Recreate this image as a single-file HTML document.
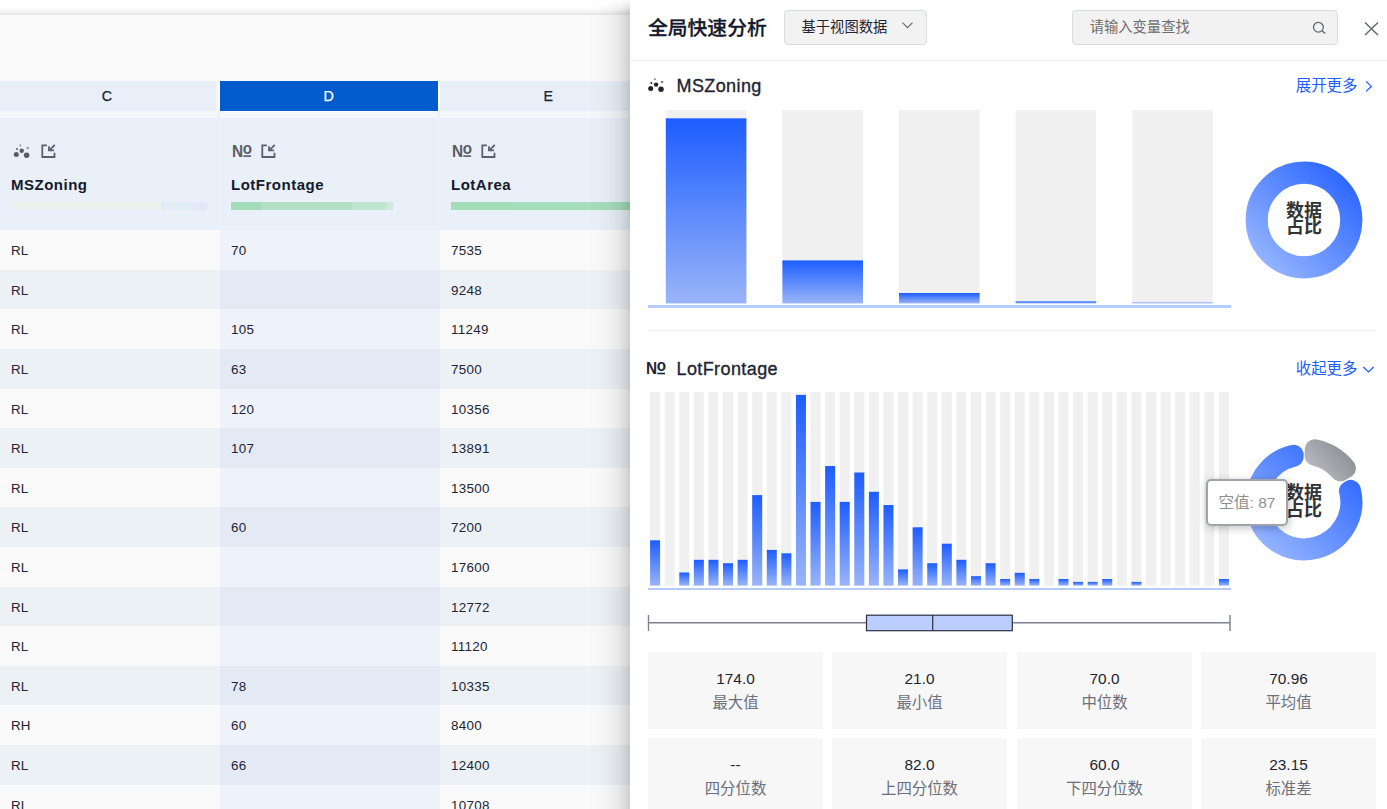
<!DOCTYPE html><html lang="zh"><head><meta charset="utf-8"><title>全局快速分析</title><style>
*{box-sizing:border-box;margin:0;padding:0}
html,body{width:1387px;height:809px;overflow:hidden;background:#fafafa;font-family:"Liberation Sans", "Noto Sans CJK SC", sans-serif;color:#1f2433}
.abs{position:absolute}
#topbar{position:absolute;left:0;top:0;width:1387px;height:14.5px;background:linear-gradient(to bottom,#fff 0%,#fff 40%,#fbfbfb 60%,#f3f3f3 80%,#e5e5e5 100%)}
#grid{position:absolute;left:0;top:0;width:640px;height:809px;overflow:hidden}
.colhd{position:absolute;top:81px;height:30px;background:#e9eff8;font-size:14.3px;line-height:31px;text-align:center;color:#1f2433;-webkit-text-stroke:.25px currentColor}
.colhd.sel{background:#005ccc;color:#fff}
#gaprow{position:absolute;left:0;top:111px;width:640px;height:7px;background:#f4f7fa}
#hdrow{position:absolute;left:0;top:118px;width:640px;height:113px;background:#e9f0f9}
.hname{position:absolute;top:175.9px;font-weight:bold;font-size:15px;letter-spacing:.5px;line-height:18px;color:#141a2b;white-space:nowrap}
.row{position:absolute;left:0;width:640px;height:39.6px}
.row.odd{background:#fafafa}
.row.even{background:#ecf1f6}
.cell{position:absolute;top:0;height:39.6px;line-height:41.2px;font-size:13.4px;color:#1f2433;padding-left:11px;white-space:nowrap}
.cell.n{letter-spacing:.3px}
.row.odd .cell.d{background:#edf2fb}
.row.even .cell.d{background:#e3eaf6}
#panel{position:absolute;left:630px;top:0;width:757px;height:809px;background:#fff}
#pshadow{position:absolute;left:588px;top:0;width:42px;height:809px;background:linear-gradient(to right,rgba(0,0,0,0) 0%,rgba(0,0,0,.01) 24%,rgba(0,0,0,.032) 50%,rgba(0,0,0,.08) 75%,rgba(0,0,0,.125) 88%,rgba(0,0,0,.18) 100%)}
#ptitle{position:absolute;left:18px;top:12.8px;font-size:19.8px;line-height:30px;font-weight:500;-webkit-text-stroke:.3px #141a2b;color:#141a2b;white-space:nowrap}
#dd{position:absolute;left:154px;top:10px;width:143px;height:35px;background:#f2f2f2;border:1px solid #d9dce6;border-radius:4px;font-size:14.3px;line-height:33px;padding-left:16.5px;color:#1f2433;white-space:nowrap}
#search{position:absolute;left:442px;top:10px;width:266px;height:35px;background:#f2f2f2;border:1px solid #d9dce6;border-radius:4px;font-size:14.3px;line-height:33px;padding-left:16.7px;color:#6e6e6e;white-space:nowrap}
.hline{position:absolute;height:1px;background:#ededed}
.stitle{position:absolute;left:46.5px;font-size:18px;letter-spacing:.4px;line-height:26px;color:#1f2433;white-space:nowrap;font-weight:500;-webkit-text-stroke:.35px #1f2433}
.more{position:absolute;right:29.6px;font-size:15.4px;line-height:22px;color:#1b5dff;white-space:nowrap}
.card{position:absolute;width:175px;height:77px;background:#f7f7f7;text-align:center}
.card .v{position:absolute;left:0;right:0;top:15.5px;font-size:15.4px;line-height:22px;color:#1f2433}
.card .l{position:absolute;left:0;right:0;top:39.8px;font-size:15.4px;line-height:22px;color:#6b707c}
#tip{position:absolute;left:576px;top:479px;width:82px;height:46.5px;background:#fff;border:2px solid #a0a3ab;border-radius:5px;box-shadow:1px 2px 8px rgba(0,0,0,.25);font-size:15.5px;line-height:44.5px;text-align:center;color:#8f8f8f;white-space:nowrap}
</style></head><body>
<div id="grid">
<div class="colhd" style="left:-2px;width:218px">C</div>
<div class="colhd sel" style="left:220px;width:217.5px">D</div>
<div class="colhd" style="left:440px;width:216.5px">E</div>
<div class="abs" style="left:216px;top:81px;width:2px;height:30px;background:#f1f5fa"></div><div class="abs" style="left:218px;top:81px;width:2px;height:30px;background:#fff"></div>
<div class="abs" style="left:437.5px;top:81px;width:2.5px;height:30px;background:#fff"></div>
<div id="gaprow"></div>
<div class="abs" style="left:218px;top:111px;width:2px;height:7px;background:#e9f0f9"></div>
<div class="abs" style="left:438px;top:111px;width:2px;height:7px;background:#e9f0f9"></div>
<div class="abs" style="left:220px;top:111px;width:217.5px;height:1.4px;background:#fff"></div>
<div id="hdrow"></div>
<div class="abs" style="left:218px;top:118px;width:2px;height:112px;background:#ebf1f9"></div>
<div class="abs" style="left:438px;top:118px;width:2px;height:112px;background:#ebf1f9"></div>
<svg class="abs" style="left:12px;top:143px" width="19" height="17" viewBox="0 0 19 17" ><g transform="translate(0 0)"><g fill="#5c5c62"><circle cx="4.3" cy="11.5" r="2.5"/><circle cx="14.6" cy="12.3" r="2.75"/><circle cx="9.7" cy="7.7" r="2.2"/><circle cx="8.4" cy="2.4" r="1.05" opacity=".55"/><circle cx="15.7" cy="5.1" r="1.25" opacity=".6"/><circle cx="5" cy="6.1" r="1"/></g></g></svg>
<svg class="abs" style="left:40px;top:143px" width="17" height="17" viewBox="0 0 17 17" ><g transform="translate(0 0.5)"><g fill="none" stroke="#596070" stroke-width="1.8"><path d="M6.9 1.9H2.3V13.5H14.5V9.2"/><path d="M14.8 1.3L9 7.1M9 2.7V6.9H14.1"/></g></g></svg>
<svg class="abs" style="left:231px;top:143px" width="23" height="17" viewBox="0 0 23 17" font-family='"Liberation Sans", sans-serif' font-weight="bold" fill="#5c5c62"><g transform="translate(0 0)"><text transform="translate(1,13.8) scale(1,1.02)" font-size="15.4">N</text><text transform="translate(11.8,10.8) scale(1,1.03)" font-size="15.2">o</text><rect x="12.3" y="12.3" width="7.8" height="1.6"/></g></svg>
<svg class="abs" style="left:260px;top:143px" width="17" height="17" viewBox="0 0 17 17" ><g transform="translate(0 0.5)"><g fill="none" stroke="#596070" stroke-width="1.8"><path d="M6.9 1.9H2.3V13.5H14.5V9.2"/><path d="M14.8 1.3L9 7.1M9 2.7V6.9H14.1"/></g></g></svg>
<svg class="abs" style="left:451px;top:143px" width="23" height="17" viewBox="0 0 23 17" font-family='"Liberation Sans", sans-serif' font-weight="bold" fill="#5c5c62"><g transform="translate(0 0)"><text transform="translate(1,13.8) scale(1,1.02)" font-size="15.4">N</text><text transform="translate(11.8,10.8) scale(1,1.03)" font-size="15.2">o</text><rect x="12.3" y="12.3" width="7.8" height="1.6"/></g></svg>
<svg class="abs" style="left:480px;top:143px" width="17" height="17" viewBox="0 0 17 17" ><g transform="translate(0 0.5)"><g fill="none" stroke="#596070" stroke-width="1.8"><path d="M6.9 1.9H2.3V13.5H14.5V9.2"/><path d="M14.8 1.3L9 7.1M9 2.7V6.9H14.1"/></g></g></svg>
<div class="hname" style="left:11px">MSZoning</div>
<div class="hname" style="left:231px">LotFrontage</div>
<div class="hname" style="left:451px">LotArea</div>
<div class="abs" style="left:11px;top:202px;width:150px;height:7.5px;background:#e9f2ed"></div><div class="abs" style="left:161px;top:202px;width:35px;height:7.5px;background:#e1edf6"></div><div class="abs" style="left:196px;top:202px;width:11px;height:7.5px;background:#e2e8fa"></div>
<div class="abs" style="left:231px;top:202px;width:30px;height:7.5px;background:#a4dcba"></div><div class="abs" style="left:261px;top:202px;width:91px;height:7.5px;background:#b1e0c4"></div><div class="abs" style="left:352px;top:202px;width:34px;height:7.5px;background:#bfe5ce"></div><div class="abs" style="left:386px;top:202px;width:6.5px;height:7.5px;background:#cfeadb"></div>
<div class="abs" style="left:451px;top:202px;width:61px;height:7.5px;background:#a4dcba"></div><div class="abs" style="left:512px;top:202px;width:128px;height:7.5px;background:#a6ddbc"></div>
<div class="row odd" style="top:230.2px"><div class="cell" style="left:0;width:220px">RL</div><div class="cell d n" style="left:220px;width:220px">70</div><div class="cell n" style="left:440px;width:200px">7535</div></div>
<div class="row even" style="top:269.8px"><div class="cell" style="left:0;width:220px">RL</div><div class="cell d n" style="left:220px;width:220px"></div><div class="cell n" style="left:440px;width:200px">9248</div></div>
<div class="row odd" style="top:309.4px"><div class="cell" style="left:0;width:220px">RL</div><div class="cell d n" style="left:220px;width:220px">105</div><div class="cell n" style="left:440px;width:200px">11249</div></div>
<div class="row even" style="top:349.0px"><div class="cell" style="left:0;width:220px">RL</div><div class="cell d n" style="left:220px;width:220px">63</div><div class="cell n" style="left:440px;width:200px">7500</div></div>
<div class="row odd" style="top:388.6px"><div class="cell" style="left:0;width:220px">RL</div><div class="cell d n" style="left:220px;width:220px">120</div><div class="cell n" style="left:440px;width:200px">10356</div></div>
<div class="row even" style="top:428.2px"><div class="cell" style="left:0;width:220px">RL</div><div class="cell d n" style="left:220px;width:220px">107</div><div class="cell n" style="left:440px;width:200px">13891</div></div>
<div class="row odd" style="top:467.8px"><div class="cell" style="left:0;width:220px">RL</div><div class="cell d n" style="left:220px;width:220px"></div><div class="cell n" style="left:440px;width:200px">13500</div></div>
<div class="row even" style="top:507.4px"><div class="cell" style="left:0;width:220px">RL</div><div class="cell d n" style="left:220px;width:220px">60</div><div class="cell n" style="left:440px;width:200px">7200</div></div>
<div class="row odd" style="top:547.0px"><div class="cell" style="left:0;width:220px">RL</div><div class="cell d n" style="left:220px;width:220px"></div><div class="cell n" style="left:440px;width:200px">17600</div></div>
<div class="row even" style="top:586.6px"><div class="cell" style="left:0;width:220px">RL</div><div class="cell d n" style="left:220px;width:220px"></div><div class="cell n" style="left:440px;width:200px">12772</div></div>
<div class="row odd" style="top:626.2px"><div class="cell" style="left:0;width:220px">RL</div><div class="cell d n" style="left:220px;width:220px"></div><div class="cell n" style="left:440px;width:200px">11120</div></div>
<div class="row even" style="top:665.8px"><div class="cell" style="left:0;width:220px">RL</div><div class="cell d n" style="left:220px;width:220px">78</div><div class="cell n" style="left:440px;width:200px">10335</div></div>
<div class="row odd" style="top:705.4px"><div class="cell" style="left:0;width:220px">RH</div><div class="cell d n" style="left:220px;width:220px">60</div><div class="cell n" style="left:440px;width:200px">8400</div></div>
<div class="row even" style="top:745.0px"><div class="cell" style="left:0;width:220px">RL</div><div class="cell d n" style="left:220px;width:220px">66</div><div class="cell n" style="left:440px;width:200px">12400</div></div>
<div class="row odd" style="top:784.6px"><div class="cell" style="left:0;width:220px">RL</div><div class="cell d n" style="left:220px;width:220px"></div><div class="cell n" style="left:440px;width:200px">10708</div></div>
</div>
<div id="topbar"></div>
<div id="pshadow"></div>
<div class="abs" style="left:588px;top:0;width:42px;height:12px;background:linear-gradient(to bottom,rgba(255,255,255,.95),rgba(255,255,255,0))"></div>
<div id="panel">
<div id="ptitle">全局快速分析</div>
<div id="dd">基于视图数据<svg class="abs" style="left:115px;top:9px" width="15" height="11" viewBox="0 0 15 11" ><g transform="translate(0.5 0.2)"><path d="M2 2.5L7 7.5L12 2.5" fill="none" stroke="#666" stroke-width="1.1"/></g></svg></div>
<div id="search">请输入变量查找<svg class="abs" style="left:237px;top:7px" width="19" height="19" viewBox="0 0 19 19" ><g transform="translate(0.4 0.7)"><g fill="none" stroke="#63676d" stroke-width="1.3"><circle cx="8" cy="8.5" r="4.9"/><path d="M11.5 12.1L14.9 14.9"/></g></g></svg></div>
<svg class="abs" style="left:733px;top:20px" width="18" height="18" viewBox="0 0 18 18"><path d="M2 2.5L15 15M15 2.5L2 15" fill="none" stroke="#666a70" stroke-width="1.5"/></svg>
<div class="hline" style="left:0;top:60px;width:757px"></div>
<svg class="abs" style="left:16px;top:76px" width="19" height="17" viewBox="0 0 19 17" ><g transform="translate(0.4 0.9)"><g fill="#1f2433"><circle cx="4.3" cy="11.5" r="2.5"/><circle cx="14.6" cy="12.3" r="2.75"/><circle cx="9.7" cy="7.7" r="2.2"/><circle cx="8.4" cy="2.4" r="1.05" opacity=".55"/><circle cx="15.7" cy="5.1" r="1.25" opacity=".6"/><circle cx="5" cy="6.1" r="1"/></g></g></svg>
<div class="stitle" style="top:72.7px">MSZoning</div>
<div class="more" style="top:75.4px">展开更多</div>
<svg class="abs" style="left:733px;top:79px" width="13" height="15" viewBox="0 0 13 15" ><g transform="translate(0 0)"><path d="M3 2.4L8.4 7.4L3 12.4" fill="none" stroke="#1b5dff" stroke-width="1.25"/></g></svg>
<svg class="abs" style="left:0;top:0" width="757" height="809" viewBox="630 0 757 809"><defs><linearGradient id="bg" x1="0" y1="0" x2="0" y2="1"><stop offset="0" stop-color="#1d5dff"/><stop offset="1" stop-color="#99b4f8"/></linearGradient><linearGradient id="dg" gradientUnits="userSpaceOnUse" x1="1345" y1="178" x2="1263" y2="262"><stop offset="0" stop-color="#2e68ff"/><stop offset="1" stop-color="#93b3ff"/></linearGradient><linearGradient id="dg2" gradientUnits="userSpaceOnUse" x1="1345" y1="460" x2="1263" y2="544"><stop offset="0" stop-color="#2e68ff"/><stop offset="1" stop-color="#93b3ff"/></linearGradient><linearGradient id="gg" gradientUnits="userSpaceOnUse" x1="1350" y1="445" x2="1312" y2="478"><stop offset="0" stop-color="#888a91"/><stop offset="1" stop-color="#bcbec4"/></linearGradient></defs><rect x="665.8" y="110" width="80.6" height="193.4" fill="#f0f0f0"/><rect x="665.8" y="118.3" width="80.6" height="185.1" fill="url(#bg)"/><rect x="782.4" y="110" width="80.6" height="193.4" fill="#f0f0f0"/><rect x="782.4" y="260.4" width="80.6" height="43.0" fill="url(#bg)"/><rect x="899.0" y="110" width="80.6" height="193.4" fill="#f0f0f0"/><rect x="899.0" y="293" width="80.6" height="10.4" fill="url(#bg)"/><rect x="1015.6" y="110" width="80.6" height="193.4" fill="#f0f0f0"/><rect x="1015.6" y="301.4" width="80.6" height="2.0" fill="url(#bg)"/><rect x="1132.2" y="110" width="80.6" height="193.4" fill="#f0f0f0"/><rect x="1132.2" y="302.1" width="80.6" height="1.3" fill="#a6bdfb"/><rect x="648" y="305" width="583" height="2.9" fill="#b5cbfe"/><circle cx="1304" cy="220" r="47.3" fill="none" stroke="url(#dg)" stroke-width="22.2"/><rect x="650.10" y="392" width="10" height="193.6" fill="#f0f0f0"/><rect x="650.10" y="540.3" width="10" height="45.3" fill="url(#bg)"/><rect x="664.69" y="392" width="10" height="193.6" fill="#f0f0f0"/><rect x="679.27" y="392" width="10" height="193.6" fill="#f0f0f0"/><rect x="679.27" y="572.5" width="10" height="13.1" fill="url(#bg)"/><rect x="693.86" y="392" width="10" height="193.6" fill="#f0f0f0"/><rect x="693.86" y="559.8" width="10" height="25.8" fill="url(#bg)"/><rect x="708.44" y="392" width="10" height="193.6" fill="#f0f0f0"/><rect x="708.44" y="559.8" width="10" height="25.8" fill="url(#bg)"/><rect x="723.03" y="392" width="10" height="193.6" fill="#f0f0f0"/><rect x="723.03" y="563.2" width="10" height="22.4" fill="url(#bg)"/><rect x="737.61" y="392" width="10" height="193.6" fill="#f0f0f0"/><rect x="737.61" y="559.8" width="10" height="25.8" fill="url(#bg)"/><rect x="752.20" y="392" width="10" height="193.6" fill="#f0f0f0"/><rect x="752.20" y="495.1" width="10" height="90.5" fill="url(#bg)"/><rect x="766.78" y="392" width="10" height="193.6" fill="#f0f0f0"/><rect x="766.78" y="549.9" width="10" height="35.7" fill="url(#bg)"/><rect x="781.37" y="392" width="10" height="193.6" fill="#f0f0f0"/><rect x="781.37" y="553.3" width="10" height="32.3" fill="url(#bg)"/><rect x="795.95" y="392" width="10" height="193.6" fill="#f0f0f0"/><rect x="795.95" y="394.9" width="10" height="190.7" fill="url(#bg)"/><rect x="810.54" y="392" width="10" height="193.6" fill="#f0f0f0"/><rect x="810.54" y="501.9" width="10" height="83.7" fill="url(#bg)"/><rect x="825.12" y="392" width="10" height="193.6" fill="#f0f0f0"/><rect x="825.12" y="466.0" width="10" height="119.6" fill="url(#bg)"/><rect x="839.71" y="392" width="10" height="193.6" fill="#f0f0f0"/><rect x="839.71" y="501.9" width="10" height="83.7" fill="url(#bg)"/><rect x="854.29" y="392" width="10" height="193.6" fill="#f0f0f0"/><rect x="854.29" y="472.5" width="10" height="113.1" fill="url(#bg)"/><rect x="868.88" y="392" width="10" height="193.6" fill="#f0f0f0"/><rect x="868.88" y="491.8" width="10" height="93.8" fill="url(#bg)"/><rect x="883.46" y="392" width="10" height="193.6" fill="#f0f0f0"/><rect x="883.46" y="505.0" width="10" height="80.6" fill="url(#bg)"/><rect x="898.05" y="392" width="10" height="193.6" fill="#f0f0f0"/><rect x="898.05" y="569.4" width="10" height="16.2" fill="url(#bg)"/><rect x="912.63" y="392" width="10" height="193.6" fill="#f0f0f0"/><rect x="912.63" y="527.3" width="10" height="58.3" fill="url(#bg)"/><rect x="927.22" y="392" width="10" height="193.6" fill="#f0f0f0"/><rect x="927.22" y="563.2" width="10" height="22.4" fill="url(#bg)"/><rect x="941.80" y="392" width="10" height="193.6" fill="#f0f0f0"/><rect x="941.80" y="543.7" width="10" height="41.9" fill="url(#bg)"/><rect x="956.38" y="392" width="10" height="193.6" fill="#f0f0f0"/><rect x="956.38" y="559.8" width="10" height="25.8" fill="url(#bg)"/><rect x="970.97" y="392" width="10" height="193.6" fill="#f0f0f0"/><rect x="970.97" y="576.2" width="10" height="9.4" fill="url(#bg)"/><rect x="985.56" y="392" width="10" height="193.6" fill="#f0f0f0"/><rect x="985.56" y="563.2" width="10" height="22.4" fill="url(#bg)"/><rect x="1000.14" y="392" width="10" height="193.6" fill="#f0f0f0"/><rect x="1000.14" y="579.0" width="10" height="6.6" fill="url(#bg)"/><rect x="1014.73" y="392" width="10" height="193.6" fill="#f0f0f0"/><rect x="1014.73" y="572.8" width="10" height="12.8" fill="url(#bg)"/><rect x="1029.31" y="392" width="10" height="193.6" fill="#f0f0f0"/><rect x="1029.31" y="579.0" width="10" height="6.6" fill="url(#bg)"/><rect x="1043.89" y="392" width="10" height="193.6" fill="#f0f0f0"/><rect x="1058.48" y="392" width="10" height="193.6" fill="#f0f0f0"/><rect x="1058.48" y="579.0" width="10" height="6.6" fill="url(#bg)"/><rect x="1073.07" y="392" width="10" height="193.6" fill="#f0f0f0"/><rect x="1073.07" y="581.9" width="10" height="3.7" fill="url(#bg)"/><rect x="1087.65" y="392" width="10" height="193.6" fill="#f0f0f0"/><rect x="1087.65" y="581.9" width="10" height="3.7" fill="url(#bg)"/><rect x="1102.24" y="392" width="10" height="193.6" fill="#f0f0f0"/><rect x="1102.24" y="579.0" width="10" height="6.6" fill="url(#bg)"/><rect x="1116.82" y="392" width="10" height="193.6" fill="#f0f0f0"/><rect x="1131.40" y="392" width="10" height="193.6" fill="#f0f0f0"/><rect x="1131.40" y="581.9" width="10" height="3.7" fill="url(#bg)"/><rect x="1145.99" y="392" width="10" height="193.6" fill="#f0f0f0"/><rect x="1160.58" y="392" width="10" height="193.6" fill="#f0f0f0"/><rect x="1175.16" y="392" width="10" height="193.6" fill="#f0f0f0"/><rect x="1189.74" y="392" width="10" height="193.6" fill="#f0f0f0"/><rect x="1204.33" y="392" width="10" height="193.6" fill="#f0f0f0"/><rect x="1218.91" y="392" width="10" height="193.6" fill="#f0f0f0"/><rect x="1218.91" y="579.0" width="10" height="6.6" fill="url(#bg)"/><rect x="648" y="588" width="583" height="2" fill="#b5cbfe"/><g stroke="#7d8291" stroke-width="1.4" fill="none"><path d="M648.5 615V631M1230 615V631M648.5 622.7H866.5M1012.3 622.7H1230"/></g><rect x="866.5" y="615.2" width="145.8" height="15.5" fill="#bccdff" stroke="#2a3042" stroke-width="1.2"/><path d="M932.7 615.2V630.7" stroke="#2a3042" stroke-width="1.2"/></svg>
<div class="hline" style="left:18px;top:330px;width:728px"></div>
<svg class="abs" style="left:15px;top:360px" width="23" height="17" viewBox="0 0 23 17" font-family='"Liberation Sans", sans-serif' font-weight="bold" fill="#1f2433"><g transform="translate(0 0.4)"><text transform="translate(1,13.8) scale(1,1.02)" font-size="15.4">N</text><text transform="translate(11.8,10.8) scale(1,1.03)" font-size="15.2">o</text><rect x="12.3" y="12.3" width="7.8" height="1.6"/></g></svg>
<div class="stitle" style="top:355.7px">LotFrontage</div>
<div class="more" style="top:358.3px">收起更多</div>
<svg class="abs" style="left:732px;top:363px" width="15" height="13" viewBox="0 0 15 13" ><g transform="translate(0 0)"><path d="M1.3 4L6.5 9L11.7 4" fill="none" stroke="#1b5dff" stroke-width="1.25"/></g></svg>
<div style="position:absolute;width:60px;text-align:center;font-weight:bold;font-size:18px;line-height:16.4px;color:#333;white-space:nowrap;left:644px;top:202.6px">数据<br>占比</div>
<div style="position:absolute;width:60px;text-align:center;font-weight:bold;font-size:18px;line-height:16.4px;color:#333;white-space:nowrap;left:644px;top:485.3px">数据<br>占比</div>
<svg class="abs" style="left:0;top:0" width="757" height="809" viewBox="630 0 757 809"><path d="M1350.86 489.90A48.40 48.40 0 1 1 1293.67 454.72L1293.68 456.86A46.30 46.30 0 1 0 1348.94 490.86Z" fill="url(#dg2)" stroke="url(#dg2)" stroke-width="20" stroke-linejoin="round"/><path d="M1314.74 449.18A53.90 53.90 0 0 1 1346.01 468.23L1340.25 471.31A47.50 47.50 0 0 0 1314.65 455.71Z" fill="url(#gg)" stroke="url(#gg)" stroke-width="20" stroke-linejoin="round"/></svg>
<div class="card" style="left:18px;top:652px"><div class="v">174.0</div><div class="l">最大值</div></div>
<div class="card" style="left:202px;top:652px"><div class="v">21.0</div><div class="l">最小值</div></div>
<div class="card" style="left:387px;top:652px"><div class="v">70.0</div><div class="l">中位数</div></div>
<div class="card" style="left:571px;top:652px"><div class="v">70.96</div><div class="l">平均值</div></div>
<div class="card" style="left:18px;top:738px"><div class="v">--</div><div class="l">四分位数</div></div>
<div class="card" style="left:202px;top:738px"><div class="v">82.0</div><div class="l">上四分位数</div></div>
<div class="card" style="left:387px;top:738px"><div class="v">60.0</div><div class="l">下四分位数</div></div>
<div class="card" style="left:571px;top:738px"><div class="v">23.15</div><div class="l">标准差</div></div>
<div id="tip">空值: 87</div>
</div>
</body></html>
